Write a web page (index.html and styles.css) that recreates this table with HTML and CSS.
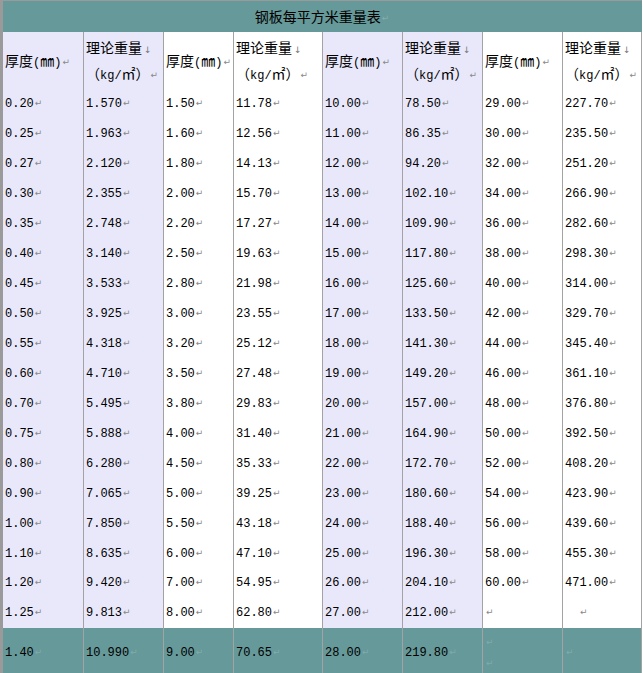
FILE: index.html
```html
<!DOCTYPE html>
<html lang="zh-CN">
<head>
<meta charset="utf-8">
<title>钢板每平方米重量表</title>
<link rel="stylesheet" href="styles.css">
</head>
<body>
<table class="sheet">
<colgroup>
<col class="c81"><col class="c80"><col class="c70"><col class="c89"><col class="c80"><col class="c80"><col class="c80"><col class="c79">
</colgroup>
<tbody>
<tr class="title"><td colspan="8"><span class="cj">钢板每平方米重量表</span><span class="rt">↵</span></td></tr>
<tr class="head">
<td class="lv"><span class="cj">厚度</span>(<span class="cj">㎜</span>)<span class="rt">↵</span></td>
<td class="lv"><span class="cj">理论重量</span><span class="lb">↓</span><br><span class="cj">（</span>kg/<span class="cj">㎡）</span><span class="rt">↵</span></td>
<td><span class="cj">厚度</span>(<span class="cj">㎜</span>)<span class="rt">↵</span></td>
<td><span class="cj">理论重量</span><span class="lb">↓</span><br><span class="cj">（</span>kg/<span class="cj">㎡）</span><span class="rt">↵</span></td>
<td class="lv"><span class="cj">厚度</span>(<span class="cj">㎜</span>)<span class="rt">↵</span></td>
<td class="lv"><span class="cj">理论重量</span><span class="lb">↓</span><br><span class="cj">（</span>kg/<span class="cj">㎡）</span><span class="rt">↵</span></td>
<td><span class="cj">厚度</span>(<span class="cj">㎜</span>)<span class="rt">↵</span></td>
<td><span class="cj">理论重量</span><span class="lb">↓</span><br><span class="cj">（</span>kg/<span class="cj">㎡）</span><span class="rt">↵</span></td>
</tr>
<tr><td class="lv">0.20<span class="rt">↵</span></td><td class="lv">1.570<span class="rt">↵</span></td><td>1.50<span class="rt">↵</span></td><td>11.78<span class="rt">↵</span></td><td class="lv">10.00<span class="rt">↵</span></td><td class="lv">78.50<span class="rt">↵</span></td><td>29.00<span class="rt">↵</span></td><td>227.70<span class="rt">↵</span></td></tr>
<tr><td class="lv">0.25<span class="rt">↵</span></td><td class="lv">1.963<span class="rt">↵</span></td><td>1.60<span class="rt">↵</span></td><td>12.56<span class="rt">↵</span></td><td class="lv">11.00<span class="rt">↵</span></td><td class="lv">86.35<span class="rt">↵</span></td><td>30.00<span class="rt">↵</span></td><td>235.50<span class="rt">↵</span></td></tr>
<tr><td class="lv">0.27<span class="rt">↵</span></td><td class="lv">2.120<span class="rt">↵</span></td><td>1.80<span class="rt">↵</span></td><td>14.13<span class="rt">↵</span></td><td class="lv">12.00<span class="rt">↵</span></td><td class="lv">94.20<span class="rt">↵</span></td><td>32.00<span class="rt">↵</span></td><td>251.20<span class="rt">↵</span></td></tr>
<tr><td class="lv">0.30<span class="rt">↵</span></td><td class="lv">2.355<span class="rt">↵</span></td><td>2.00<span class="rt">↵</span></td><td>15.70<span class="rt">↵</span></td><td class="lv">13.00<span class="rt">↵</span></td><td class="lv">102.10<span class="rt">↵</span></td><td>34.00<span class="rt">↵</span></td><td>266.90<span class="rt">↵</span></td></tr>
<tr><td class="lv">0.35<span class="rt">↵</span></td><td class="lv">2.748<span class="rt">↵</span></td><td>2.20<span class="rt">↵</span></td><td>17.27<span class="rt">↵</span></td><td class="lv">14.00<span class="rt">↵</span></td><td class="lv">109.90<span class="rt">↵</span></td><td>36.00<span class="rt">↵</span></td><td>282.60<span class="rt">↵</span></td></tr>
<tr><td class="lv">0.40<span class="rt">↵</span></td><td class="lv">3.140<span class="rt">↵</span></td><td>2.50<span class="rt">↵</span></td><td>19.63<span class="rt">↵</span></td><td class="lv">15.00<span class="rt">↵</span></td><td class="lv">117.80<span class="rt">↵</span></td><td>38.00<span class="rt">↵</span></td><td>298.30<span class="rt">↵</span></td></tr>
<tr><td class="lv">0.45<span class="rt">↵</span></td><td class="lv">3.533<span class="rt">↵</span></td><td>2.80<span class="rt">↵</span></td><td>21.98<span class="rt">↵</span></td><td class="lv">16.00<span class="rt">↵</span></td><td class="lv">125.60<span class="rt">↵</span></td><td>40.00<span class="rt">↵</span></td><td>314.00<span class="rt">↵</span></td></tr>
<tr><td class="lv">0.50<span class="rt">↵</span></td><td class="lv">3.925<span class="rt">↵</span></td><td>3.00<span class="rt">↵</span></td><td>23.55<span class="rt">↵</span></td><td class="lv">17.00<span class="rt">↵</span></td><td class="lv">133.50<span class="rt">↵</span></td><td>42.00<span class="rt">↵</span></td><td>329.70<span class="rt">↵</span></td></tr>
<tr><td class="lv">0.55<span class="rt">↵</span></td><td class="lv">4.318<span class="rt">↵</span></td><td>3.20<span class="rt">↵</span></td><td>25.12<span class="rt">↵</span></td><td class="lv">18.00<span class="rt">↵</span></td><td class="lv">141.30<span class="rt">↵</span></td><td>44.00<span class="rt">↵</span></td><td>345.40<span class="rt">↵</span></td></tr>
<tr><td class="lv">0.60<span class="rt">↵</span></td><td class="lv">4.710<span class="rt">↵</span></td><td>3.50<span class="rt">↵</span></td><td>27.48<span class="rt">↵</span></td><td class="lv">19.00<span class="rt">↵</span></td><td class="lv">149.20<span class="rt">↵</span></td><td>46.00<span class="rt">↵</span></td><td>361.10<span class="rt">↵</span></td></tr>
<tr><td class="lv">0.70<span class="rt">↵</span></td><td class="lv">5.495<span class="rt">↵</span></td><td>3.80<span class="rt">↵</span></td><td>29.83<span class="rt">↵</span></td><td class="lv">20.00<span class="rt">↵</span></td><td class="lv">157.00<span class="rt">↵</span></td><td>48.00<span class="rt">↵</span></td><td>376.80<span class="rt">↵</span></td></tr>
<tr><td class="lv">0.75<span class="rt">↵</span></td><td class="lv">5.888<span class="rt">↵</span></td><td>4.00<span class="rt">↵</span></td><td>31.40<span class="rt">↵</span></td><td class="lv">21.00<span class="rt">↵</span></td><td class="lv">164.90<span class="rt">↵</span></td><td>50.00<span class="rt">↵</span></td><td>392.50<span class="rt">↵</span></td></tr>
<tr><td class="lv">0.80<span class="rt">↵</span></td><td class="lv">6.280<span class="rt">↵</span></td><td>4.50<span class="rt">↵</span></td><td>35.33<span class="rt">↵</span></td><td class="lv">22.00<span class="rt">↵</span></td><td class="lv">172.70<span class="rt">↵</span></td><td>52.00<span class="rt">↵</span></td><td>408.20<span class="rt">↵</span></td></tr>
<tr><td class="lv">0.90<span class="rt">↵</span></td><td class="lv">7.065<span class="rt">↵</span></td><td>5.00<span class="rt">↵</span></td><td>39.25<span class="rt">↵</span></td><td class="lv">23.00<span class="rt">↵</span></td><td class="lv">180.60<span class="rt">↵</span></td><td>54.00<span class="rt">↵</span></td><td>423.90<span class="rt">↵</span></td></tr>
<tr><td class="lv">1.00<span class="rt">↵</span></td><td class="lv">7.850<span class="rt">↵</span></td><td>5.50<span class="rt">↵</span></td><td>43.18<span class="rt">↵</span></td><td class="lv">24.00<span class="rt">↵</span></td><td class="lv">188.40<span class="rt">↵</span></td><td>56.00<span class="rt">↵</span></td><td>439.60<span class="rt">↵</span></td></tr>
<tr><td class="lv">1.10<span class="rt">↵</span></td><td class="lv">8.635<span class="rt">↵</span></td><td>6.00<span class="rt">↵</span></td><td>47.10<span class="rt">↵</span></td><td class="lv">25.00<span class="rt">↵</span></td><td class="lv">196.30<span class="rt">↵</span></td><td>58.00<span class="rt">↵</span></td><td>455.30<span class="rt">↵</span></td></tr>
<tr><td class="lv">1.20<span class="rt">↵</span></td><td class="lv">9.420<span class="rt">↵</span></td><td>7.00<span class="rt">↵</span></td><td>54.95<span class="rt">↵</span></td><td class="lv">26.00<span class="rt">↵</span></td><td class="lv">204.10<span class="rt">↵</span></td><td>60.00<span class="rt">↵</span></td><td>471.00<span class="rt">↵</span></td></tr>
<tr><td class="lv">1.25<span class="rt">↵</span></td><td class="lv">9.813<span class="rt">↵</span></td><td>8.00<span class="rt">↵</span></td><td>62.80<span class="rt">↵</span></td><td class="lv">27.00<span class="rt">↵</span></td><td class="lv">212.00<span class="rt">↵</span></td><td><span class="rt">↵</span></td><td><span class="ind"></span><span class="rt">↵</span></td></tr>
<tr class="foot"><td>1.40<span class="rt">↵</span></td><td>10.990<span class="rt">↵</span></td><td>9.00<span class="rt">↵</span></td><td>70.65<span class="rt">↵</span></td><td>28.00<span class="rt">↵</span></td><td>219.80<span class="rt">↵</span></td><td class="twoline"><span class="rt">↵</span><br><span class="rt">↵</span></td><td><span class="rt">↵</span></td></tr>
</tbody>
</table>
</body>
</html>
```

FILE: styles.css
```css
html, body {
  margin: 0;
  padding: 0;
  background: #ffffff;
}

.sheet {
  border-collapse: separate;
  border-spacing: 0;
  table-layout: fixed;
  width: 642px;
  border-left: 3px solid #9a9a9a;
  border-top: 1px solid #9a9a9a;
}

.c81 { width: 81px; }
.c80 { width: 80px; }
.c79 { width: 79px; }
.c70 { width: 70px; }
.c89 { width: 89px; }

.sheet td {
  box-sizing: border-box;
  padding: 0 0 0 2px;
  border-right: 1px solid #a3a3a3;
  vertical-align: middle;
  font-family: "Liberation Mono", "Noto Sans CJK SC", monospace;
  font-size: 12px;
  line-height: 20px;
  color: #000000;
  white-space: nowrap;
  overflow: hidden;
  background: #ffffff;
}

.sheet td.lv {
  background: #e8e8fa;
}

.sheet tr {
  height: 29.94px;
}

.cj {
  font-family: "Noto Sans CJK SC", sans-serif;
  font-size: 14px;
}

.rt {
  font-family: "DejaVu Sans", sans-serif;
  font-size: 9px;
  color: #888888;
  margin-left: 1px;
  vertical-align: 1px;
}

.lb {
  font-family: "DejaVu Sans", sans-serif;
  font-size: 9px;
  color: #777777;
  margin-left: 2px;
}

.ind {
  display: inline-block;
  width: 14px;
}

.sheet tr.title {
  height: 31px;
}

.sheet tr.title td {
  background: #669999;
  text-align: center;
  border-right: 1px solid #669999;
  padding: 2px 0 0;
}

.sheet tr.title .rt {
  color: #86acac;
}

.sheet tr.head {
  height: 57px;
}

.sheet tr.head td {
  line-height: 23px;
  padding-top: 2px;
}

.sheet tr.foot {
  height: 50px;
}

.sheet tr.foot td {
  background: #669999;
}

.sheet tr.foot .rt {
  color: #82aaaa;
}
```
